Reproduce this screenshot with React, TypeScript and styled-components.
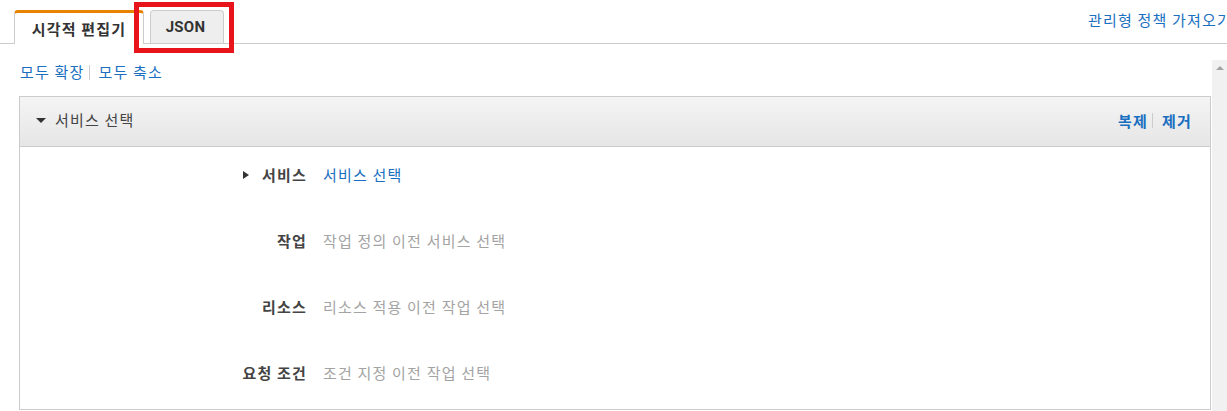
import styled, { createGlobalStyle } from "styled-components";

const GlobalStyle = createGlobalStyle`
  html, body {
    margin: 0;
    padding: 0;
    background: #fff;
    overflow: hidden;
  }
  body {
    font-family: "Noto Sans CJK KR", "Noto Sans", sans-serif;
    font-size: 15px;
    color: #444;
  }
`;

type Row = {
  label: string;
  value: string;
  active?: boolean;
  expandable?: boolean;
};

const rows: Row[] = [
  { label: "서비스", value: "서비스 선택", active: true, expandable: true },
  { label: "작업", value: "작업 정의 이전 서비스 선택" },
  { label: "리소스", value: "리소스 적용 이전 작업 선택" },
  { label: "요청 조건", value: "조건 지정 이전 작업 선택" },
];

const App = () => {
  return (
    <Page>
      <GlobalStyle />
      <TopBar>
        <Tabs>
          <Tab $active>시각적 편집기</Tab>
          <Tab>JSON</Tab>
        </Tabs>
        <TopLink href="#">관리형 정책 가져오기</TopLink>
        <Highlight />
      </TopBar>

      <ContentArea>
        <Main>
          <LinkRow>
            <TextLink href="#">모두 확장</TextLink>
            <Divider />
            <TextLink href="#">모두 축소</TextLink>
          </LinkRow>

          <Panel>
            <PanelHeader>
              <HeaderTitle>
                <CaretDown />
                서비스 선택
              </HeaderTitle>
              <HeaderActions>
                <ActionLink href="#">복제</ActionLink>
                <Divider />
                <ActionLink href="#">제거</ActionLink>
              </HeaderActions>
            </PanelHeader>

            <PanelBody>
              {rows.map((row) => (
                <FieldRow key={row.label}>
                  <FieldLabel>
                    {row.expandable && <CaretRight />}
                    {row.label}
                  </FieldLabel>
                  <FieldValue $active={row.active}>{row.value}</FieldValue>
                </FieldRow>
              ))}
            </PanelBody>
          </Panel>
        </Main>

        <Scrollbar>
          <ScrollArrow />
        </Scrollbar>
      </ContentArea>
    </Page>
  );
};

const Page = styled.div`
  width: 1227px;
  height: 411px;
  overflow: hidden;
`;

const TopBar = styled.div`
  position: relative;
  display: flex;
  justify-content: space-between;
  align-items: flex-start;
  height: 43px;
  border-bottom: 1px solid #ccc;
  padding-left: 14px;
`;

const Tabs = styled.div`
  display: flex;
  align-items: flex-end;
  gap: 6px;
  height: 100%;
`;

const Tab = styled.div<{ $active?: boolean }>`
  box-sizing: border-box;
  display: flex;
  align-items: center;
  justify-content: center;
  height: ${(p) => (p.$active ? "34px" : "33px")};
  margin-bottom: ${(p) => (p.$active ? "-1px" : "0")};
  font-weight: bold;
  font-size: 15px;
  color: #333;
  background: ${(p) => (p.$active ? "#fff" : "#eee")};
  border: 1px solid #ccc;
  border-bottom: none;
  border-top: ${(p) => (p.$active ? "3px solid #e88300" : "1px solid #ccc")};
  border-radius: 4px 4px 0 0;
  letter-spacing: ${(p) => (p.$active ? "1.2px" : "0.3px")};
  font-family: ${(p) =>
    p.$active
      ? `"Noto Sans CJK KR", sans-serif`
      : `Roboto, "Noto Sans CJK KR", sans-serif`};
  width: ${(p) => (p.$active ? "130px" : "74px")};
  padding-right: ${(p) => (p.$active ? "0" : "3px")};
`;

const TopLink = styled.a`
  flex-shrink: 0;
  margin-top: 11px;
  margin-right: -5px;
  color: #1a6fc0;
  text-decoration: none;
  letter-spacing: 1.2px;
  white-space: nowrap;
  line-height: 18px;
`;

const Highlight = styled.div`
  position: absolute;
  left: 134px;
  top: 2px;
  width: 100px;
  height: 51px;
  box-sizing: border-box;
  border: 5px solid #e8141c;
  pointer-events: none;
`;

const ContentArea = styled.div`
  display: flex;
  margin-top: 16px;
`;

const Main = styled.div`
  flex: 1;
  padding: 0 1px 0 19px;
`;

const LinkRow = styled.div`
  display: flex;
  align-items: center;
  padding: 4px 0 0 1px;
  height: 16px;
  margin-bottom: 16px;
`;

const TextLink = styled.a`
  color: #1a6fc0;
  text-decoration: none;
  letter-spacing: 1.2px;
  line-height: 16px;
`;

const Divider = styled.span`
  display: inline-block;
  width: 1px;
  height: 15px;
  background: #ccc;
  margin: 0 9px 0 4px;
`;

const Panel = styled.section`
  border: 1px solid #ccc;
`;

const PanelHeader = styled.header`
  display: flex;
  justify-content: space-between;
  align-items: center;
  height: 49px;
  padding: 0 18px 0 16px;
  background: linear-gradient(#f4f4f4, #e6e6e6);
  border-bottom: 1px solid #ccc;
`;

const HeaderTitle = styled.div`
  display: flex;
  align-items: center;
  color: #444;
  letter-spacing: 1.2px;
  padding-bottom: 4px;
`;

const CaretDown = styled.span`
  width: 0;
  height: 0;
  border-left: 5px solid transparent;
  border-right: 5px solid transparent;
  border-top: 5px solid #333;
  margin-right: 9px;
  margin-top: 2px;
`;

const HeaderActions = styled.div`
  display: flex;
  align-items: center;
  padding-bottom: 3px;
`;

const ActionLink = styled.a`
  color: #1a6fc0;
  font-weight: bold;
  text-decoration: none;
  letter-spacing: 1.2px;
`;

const PanelBody = styled.div`
  display: grid;
  grid-template-columns: 287px 1fr;
  row-gap: 48px;
  padding: 19px 0 27px;
`;

const FieldRow = styled.div`
  display: contents;
`;

const FieldLabel = styled.div`
  display: flex;
  align-items: center;
  justify-content: flex-end;
  line-height: 18px;
  font-weight: bold;
  color: #444;
  letter-spacing: 1.2px;
`;

const CaretRight = styled.span`
  width: 0;
  height: 0;
  border-top: 4px solid transparent;
  border-bottom: 4px solid transparent;
  border-left: 6px solid #333;
  margin-right: 13px;
`;

const FieldValue = styled.div<{ $active?: boolean }>`
  padding-left: 16px;
  line-height: 18px;
  letter-spacing: 1.2px;
  color: ${(p) => (p.$active ? "#1a6fc0" : "#a3a3a3")};
`;

const Scrollbar = styled.div`
  width: 15px;
  height: 360px;
  background: #f1f1f1;
  display: flex;
  justify-content: center;
  padding-top: 6px;
  box-sizing: border-box;
`;

const ScrollArrow = styled.span`
  width: 0;
  height: 0;
  border-left: 4px solid transparent;
  border-right: 4px solid transparent;
  border-bottom: 4px solid #a3a3a3;
`;

export default App;
